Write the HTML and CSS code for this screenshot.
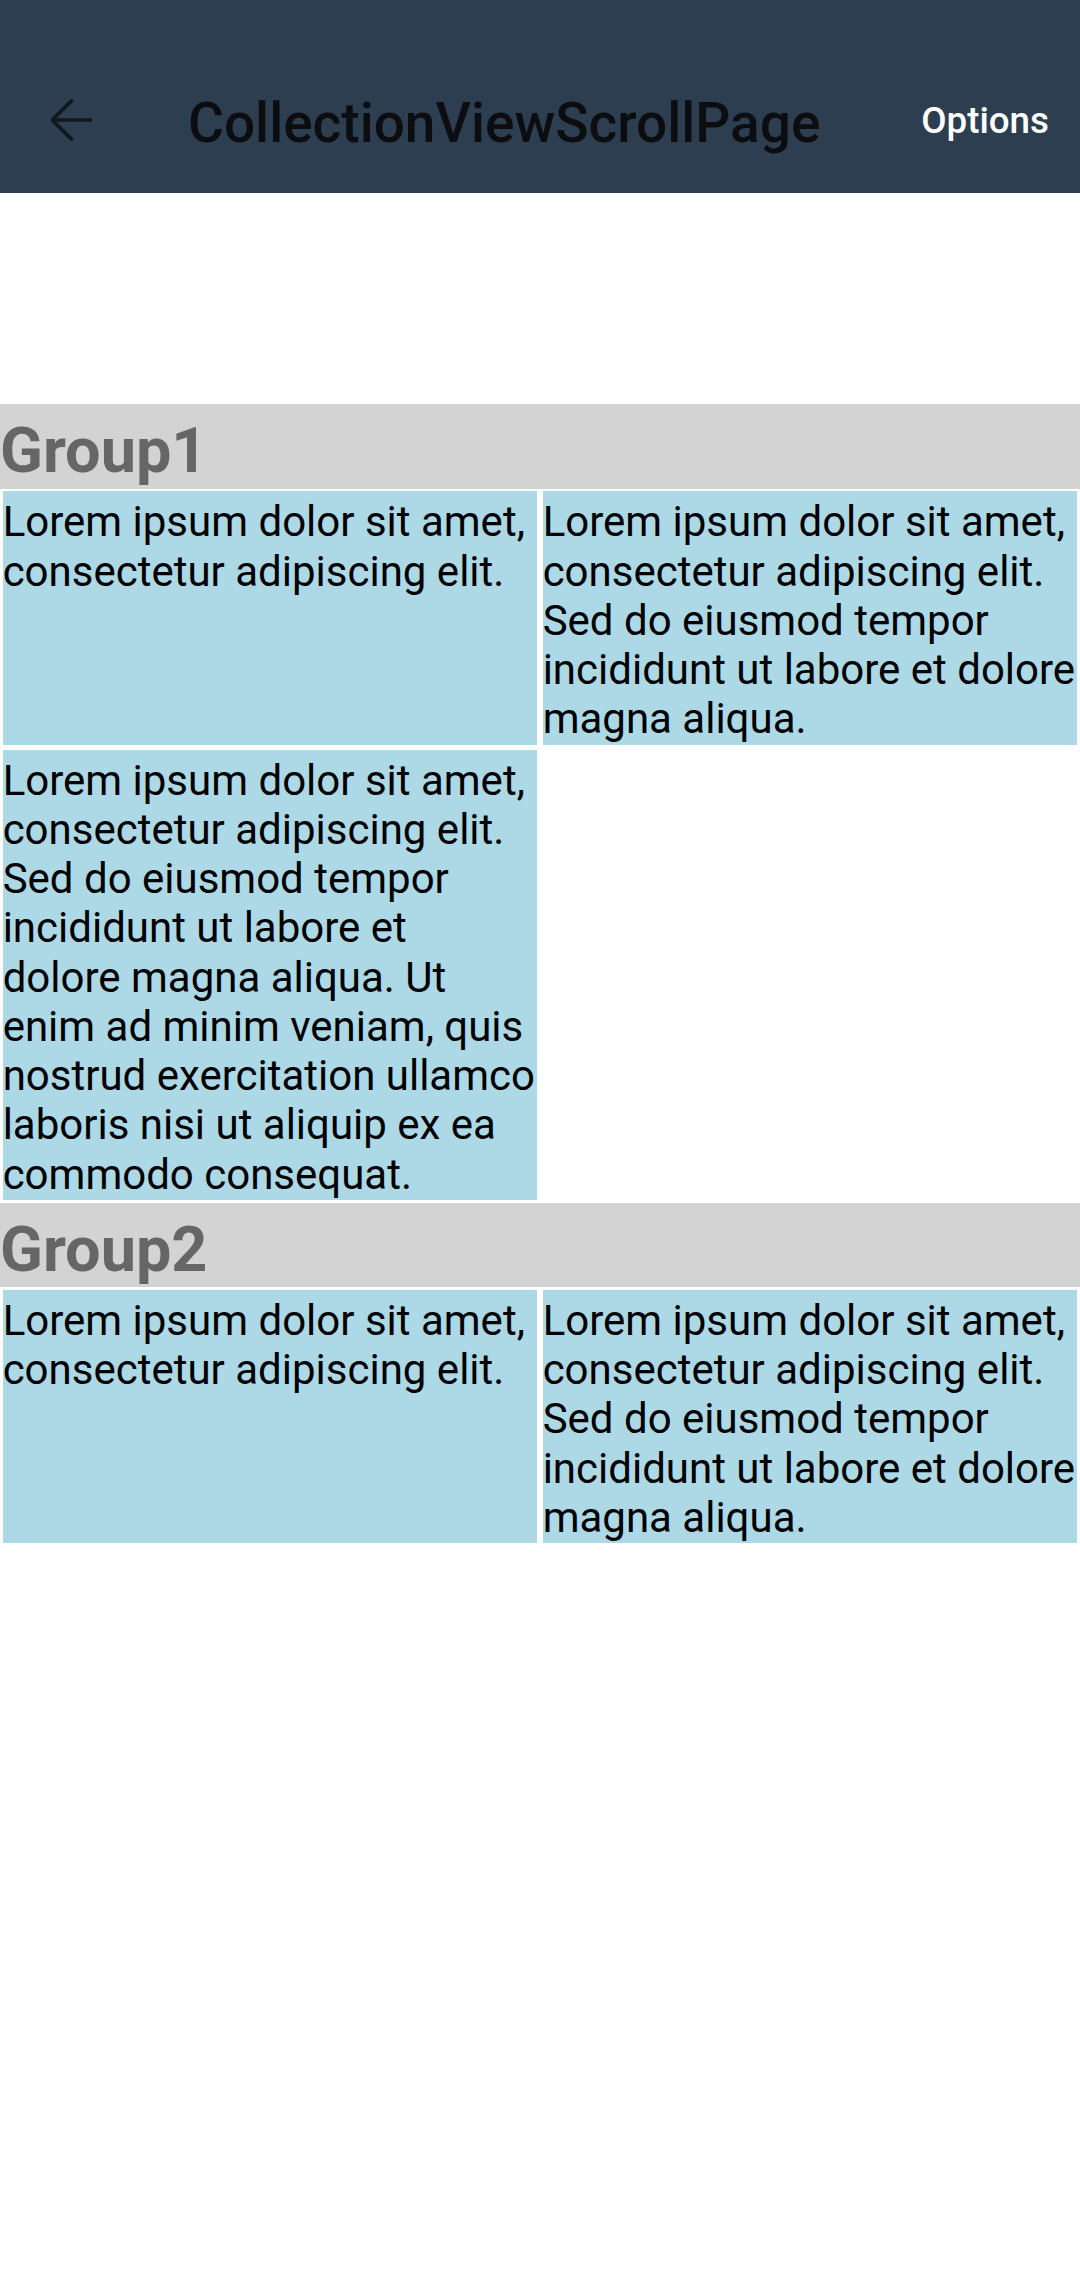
FILE: index.html
```html
<!DOCTYPE html>
<html lang="en">
<head>
<meta charset="utf-8">
<title>CollectionViewScrollPage</title>
<link rel="stylesheet" href="styles.css">
</head>
<body>
<header class="toolbar">
  <svg class="back-icon" viewBox="0 0 42 42" width="42" height="42" aria-hidden="true">
    <path d="M2 21 H42 M2 21 L22.7 0.8 M2 21 L22.7 41.2" fill="none" stroke="#10161e" stroke-width="3.6"/>
  </svg>
  <h1 class="toolbar-title">CollectionViewScrollPage</h1>
  <span class="toolbar-action">Options</span>
</header>

<main class="content">
  <div class="spacer"></div>

  <section class="group">
    <h2 class="group-header">Group1</h2>
    <div class="grid">
      <div class="cell"><p class="cell-text">Lorem ipsum dolor sit amet, consectetur adipiscing elit.</p></div>
      <div class="cell"><p class="cell-text">Lorem ipsum dolor sit amet, consectetur adipiscing elit. Sed do eiusmod tempor incididunt ut labore et dolore magna aliqua.</p></div>
      <div class="cell"><p class="cell-text">Lorem ipsum dolor sit amet, consectetur adipiscing elit. Sed do eiusmod tempor incididunt ut labore et<br>dolore magna aliqua. Ut enim ad minim veniam, quis nostrud exercitation ullamco laboris nisi ut aliquip ex ea commodo consequat.</p></div>
    </div>
  </section>

  <section class="group">
    <h2 class="group-header">Group2</h2>
    <div class="grid">
      <div class="cell"><p class="cell-text">Lorem ipsum dolor sit amet, consectetur adipiscing elit.</p></div>
      <div class="cell"><p class="cell-text">Lorem ipsum dolor sit amet, consectetur adipiscing elit. Sed do eiusmod tempor incididunt ut labore et dolore magna aliqua.</p></div>
    </div>
  </section>
</main>
</body>
</html>
```

FILE: styles.css
```css
html, body {
  margin: 0;
  padding: 0;
  background: #ffffff;
}

body {
  font-family: Roboto, "Noto Sans", "Liberation Sans", sans-serif;
  width: 1080px;
}

.toolbar {
  box-sizing: border-box;
  height: 193px;
  padding-top: 47px;
  background: #2d3e50;
  display: flex;
  align-items: center;
}

.back-icon {
  display: block;
  margin-left: 50px;
  flex: none;
}

.toolbar-title {
  margin: 6px 0 0 96px;
  font-size: 55px;
  font-weight: 500;
  line-height: normal;
  color: #0b0d10;
  white-space: nowrap;
}

.toolbar-action {
  margin-left: auto;
  margin-right: 31px;
  font-size: 36.75px;
  font-weight: 500;
  color: #ffffff;
}

.spacer {
  height: 211px;
}

.group-header {
  box-sizing: border-box;
  height: 84.7px;
  margin: 0;
  padding-top: 10px;
  background: #d3d3d3;
  color: #666666;
  font-size: 63px;
  font-weight: 700;
  line-height: 74px;
}

.grid {
  display: grid;
  grid-template-columns: 1fr 1fr;
  gap: 5.25px;
  padding: 2.625px;
}

.cell {
  background: #add8e6;
}

.cell-text {
  margin: 0;
  padding: 6px 0 1.3px 0;
  font-size: 42px;
  line-height: 49.2px;
  color: #000000;
}
```
